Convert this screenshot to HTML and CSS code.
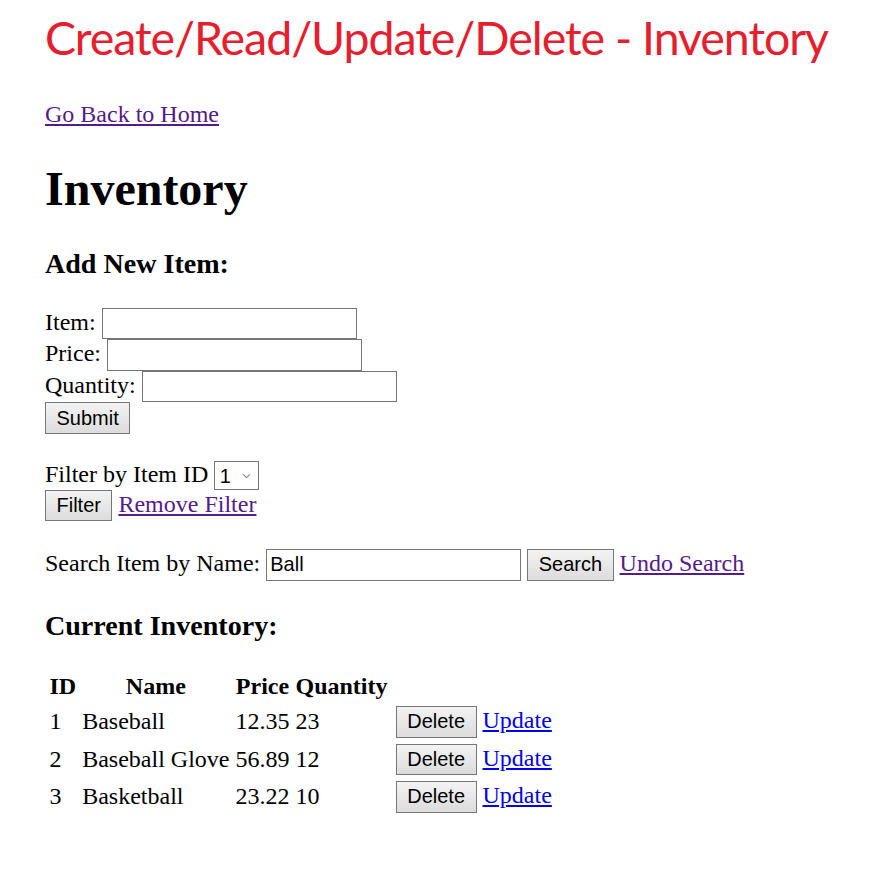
FILE: index.html
```html
<!DOCTYPE html>
<html>
<head>
<meta charset="utf-8">
<link rel="stylesheet" href="styles.css">
<title>Inventory</title>
</head>
<body>
<div class="page">
  <h1 class="title">Create/Read/Update/Delete - Inventory</h1>
  <p class="back"><a href="#" class="visited">Go Back to Home</a></p>
  <h1 class="main">Inventory</h1>
  <h3 class="sub">Add New Item:</h3>
  <form class="add-form">
    Item: <input type="text" class="field"><br>
    Price: <input type="text" class="field"><br>
    Quantity: <input type="text" class="field"><br>
    <button type="button" class="btn">Submit</button>
  </form>
  <p class="filter">
    Filter by Item ID <select class="sel"><option>1</option></select><br>
    <button type="button" class="btn">Filter</button> <a href="#" class="visited">Remove Filter</a>
  </p>
  <p class="search">
    Search Item by Name: <input type="text" class="field" value="Ball"> <button type="button" class="btn">Search</button> <a href="#" class="visited">Undo Search</a>
  </p>
  <h3 class="sub sub-cur">Current Inventory:</h3>
  <table class="inv">
    <thead>
      <tr><th>ID</th><th>Name</th><th>Price</th><th>Quantity</th><th></th></tr>
    </thead>
    <tbody>
      <tr><td>1</td><td>Baseball</td><td>12.35</td><td>23</td><td><button type="button" class="btn">Delete</button> <a href="#" class="link">Update</a></td></tr>
      <tr><td>2</td><td>Baseball Glove</td><td>56.89</td><td>12</td><td><button type="button" class="btn">Delete</button> <a href="#" class="link">Update</a></td></tr>
      <tr><td>3</td><td>Basketball</td><td>23.22</td><td>10</td><td><button type="button" class="btn">Delete</button> <a href="#" class="link">Update</a></td></tr>
    </tbody>
  </table>
</div>
</body>
</html>
```
FILE: styles.css
```css
html, body {
  margin: 0;
  padding: 0;
  background: #fff;
}
.page {
  zoom: 1.5;
  padding: 0 30px;
  font-family: "Liberation Serif", "Times New Roman", serif;
  font-size: 16px;
  color: #000;
}
.title {
  font-family: Lato, "Open Sans", sans-serif;
  font-weight: normal;
  font-size: 31px;
  letter-spacing: -0.7px;
  color: #e5202e;
  margin: 6.6px 0 0;
  line-height: 1.2;
  white-space: nowrap;
}
.back {
  margin: 23.7px 0 16px;
}
.visited {
  color: #551a8b;
}
.link {
  color: #0000ee;
}
.main {
  font-size: 32px;
  margin: 22px 0 21px;
}
.sub {
  font-size: 18.72px;
  margin: 18.72px 0;
}
.sub-cur {
  margin: 19.4px 0 18px;
}
.add-form {
  margin: 0;
}
.field {
  font-family: "Liberation Sans", Arial, sans-serif;
  font-size: 13.33px;
  width: 170px;
  height: 21px;
  box-sizing: border-box;
  border: 1px solid #767676;
  padding: 1px 2px;
  margin: 0;
  vertical-align: baseline;
}
.btn {
  font-family: "Liberation Sans", Arial, sans-serif;
  font-size: 13.33px;
  background: linear-gradient(#f3f3f3, #dcdcdc);
  border: 1px solid #767676;
  padding: 1px 7px;
  height: 21px;
  margin: 0;
  color: #000;
}
.sel {
  -webkit-appearance: none;
  appearance: none;
  font-family: "Liberation Sans", Arial, sans-serif;
  font-size: 13.33px;
  border: 1px solid #767676;
  background: #fff url("data:image/svg+xml,%3Csvg xmlns='http://www.w3.org/2000/svg' width='8' height='5' viewBox='0 0 8 5'%3E%3Cpath d='M1 1l3 3 3-3' fill='none' stroke='%23888' stroke-width='1'/%3E%3C/svg%3E") no-repeat right 5px center;
  background-size: 6px 4px;
  height: 19px;
  width: 30px;
  padding: 0 0 0 3px;
  margin: 0;
  color: #000;
}
.filter {
  margin: 18.3px 0 16px;
}
.search {
  margin: 18.5px 0 16px;
}
.inv {
  border-spacing: 2px;
  margin: 0;
}
.inv th, .inv td {
  padding: 1px;
}
.inv th:nth-child(4) {
  padding-right: 2.5px;
}
.inv td {
  text-align: left;
}
```
